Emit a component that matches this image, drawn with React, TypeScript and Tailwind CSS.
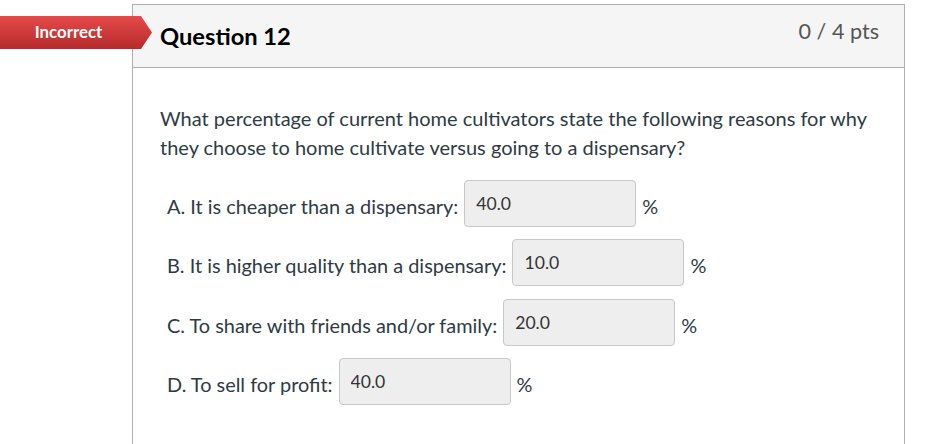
import React from "react";

const rows = [
  { label: "A. It is cheaper than a dispensary:", value: "40.0" },
  { label: "B. It is higher quality than a dispensary:", value: "10.0" },
  { label: "C. To share with friends and/or family:", value: "20.0" },
  { label: "D. To sell for profit:", value: "40.0" },
];

export default function App() {
  return (
    <div className="relative min-h-[444px] bg-white pl-[132px] pt-[4px] font-['Lato','Liberation_Sans',sans-serif] text-[#2d3b45]">
      <div
        className="absolute left-0 top-[16px] flex h-[33px] w-[152px] items-center bg-gradient-to-b from-[#e64a4a] to-[#b52a2a] [clip-path:polygon(0_0,141px_0,152px_50%,141px_100%,0_100%)]"
      >
        <span className="w-[137px] text-center text-[16.8px] font-bold leading-none text-white">Incorrect</span>
      </div>
      <div className="h-[460px] w-[773px] border border-b-0 border-[#b0b0b0]">
        <div className="flex h-[63px] items-start justify-between border-b border-[#b0b0b0] bg-[#f5f5f5] pl-[27px] pr-[25px]">
          <h2 className="pt-[16px] text-[23.7px] font-bold leading-[30px] text-black">Question 12</h2>
          <div className="pt-[13px] text-[21.6px] leading-[26px] text-[#555]">0 / 4 pts</div>
        </div>
        <div className="pl-[27px] pr-[27px] pt-[36px]">
          <p className="text-[20px] leading-[29px]">
            What percentage of current home cultivators state the following reasons for why they choose to home cultivate versus going to a dispensary?
          </p>
          <div className="mt-[18px] flex flex-col gap-[12.3px] pl-[7px]">
            {rows.map((r) => (
              <div key={r.label} className="flex h-[47px] items-start">
                <span className="mt-[12px] text-[19.9px] leading-[29px]">{r.label}</span>
                <input
                  readOnly
                  value={r.value}
                  className="ml-[6px] h-[47px] w-[172px] rounded-[4px] border border-[#c8c8c8] bg-[#eeeeee] px-[11px] text-[17.6px] text-[#333] outline-none"
                />
                <span className="ml-[6px] mt-[12px] text-[19.9px] leading-[29px]">%</span>
              </div>
            ))}
          </div>
        </div>
      </div>
    </div>
  );
}
